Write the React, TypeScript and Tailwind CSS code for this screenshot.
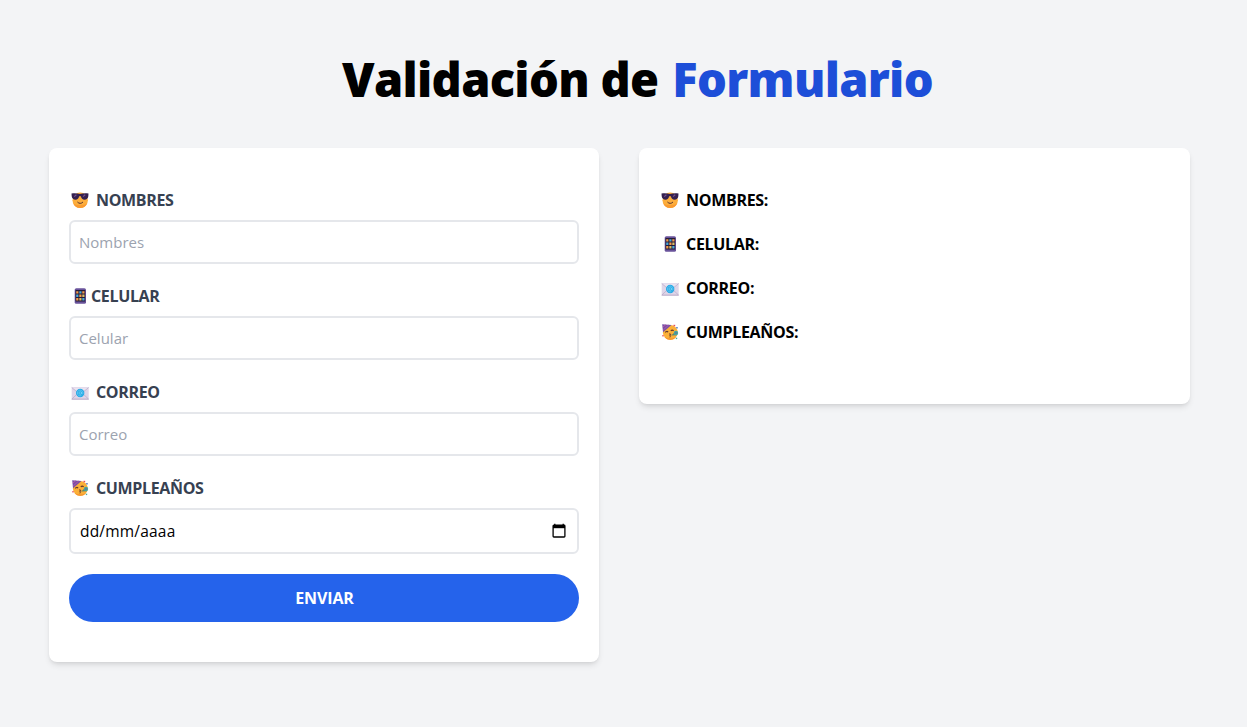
import React from 'react';

function CoolFace() {
  return (
    <svg viewBox="0 0 18 18" className="h-[18px] w-[18px] shrink-0">
      <circle cx="9.200" cy="9.200" r="7.700" fill="#fcae3c" />
      <path d="M2 12a7.700 7.700 0 0 0 14.400 0c-3.500 3-11 3-14.400 0Z" fill="#fa9b30" />
      <path d="M.5 2.600C3.200 1.800 6.200 2.200 9 3c2.800-.8 5.800-1.200 8.500-.4l-.2 2.600c-.3 2.300-1.700 3.500-3.800 3.500-2 0-3.200-1.200-3.600-3.500H8.100c-.4 2.300-1.600 3.500-3.600 3.500C2.400 8.700 1 7.500.7 5.200Z" fill="#35204f" />
      <path d="m3.200 5.600 2.200-1.800M12 5.600l2.200-1.800" stroke="#74518f" strokeWidth="1.200" />
      <path d="M6.700 11.300c1.500 1.500 3.500 1.500 5 0" stroke="#553034" strokeWidth="1" fill="none" strokeLinecap="round" />
    </svg>
  );
}

function Phone() {
  return (
    <svg viewBox="0 0 18 18" className="h-[18px] w-[18px] shrink-0">
      <rect x="3.700" y="1.200" width="11.300" height="15.600" rx="1.600" fill="#69539b" />
      <rect x="4.500" y="3" width="9.700" height="11.500" fill="#251c38" />
      <path d="M5.200 4.200h2.200v2.400H5.200zM11.300 4.200h2.200v2.400h-2.200zM8.300 7.500h2.200v2.400H8.300zM5.200 11h2.200v2.400H5.200z" fill="#f39a4a" />
      <path d="M8.300 4.200h2.200v2.400H8.300zM5.200 7.500h2.200v2.400H5.200zM11.300 11h2.200v2.400h-2.200z" fill="#4aa9d6" />
      <path d="M11.300 7.500h2.200v2.400h-2.200zM8.300 11h2.200v2.400H8.300z" fill="#d8bd67" />
    </svg>
  );
}

function Mail() {
  return (
    <svg viewBox="0 0 18 18" className="h-[18px] w-[18px] shrink-0">
      <rect x=".7" y="4" width="17" height="12.300" rx=".7" fill="#ded5e8" />
      <path d="m.7 4.500 8.500 7 8.500-7" fill="#e9e2ef" stroke="#b7a9c8" strokeWidth=".7" />
      <path d="m.9 16 5.300-5M17.500 16l-5.300-5" stroke="#b7a9c8" strokeWidth=".7" />
      <path d="M.7 16.200h17" stroke="#a997bc" strokeWidth=".8" />
      <circle cx="9.200" cy="10" r="4.200" fill="#25a9e5" />
      <circle cx="9.200" cy="10" r="1.300" fill="none" stroke="#8bdcfa" strokeWidth=".6" />
      <path d="M10.500 8.700v1.700c0 1.300 1.500.9 1.500-.5 0-3.700-5.600-3.700-5.600.1 0 2.600 2.400 3.500 4 2.500" fill="none" stroke="#8bdcfa" strokeWidth=".5" />
    </svg>
  );
}

function PartyFace() {
  return (
    <svg viewBox="0 0 18 18" className="h-[18px] w-[18px] shrink-0">
      <circle cx="9.300" cy="9.500" r="7.400" fill="#fbb038" />
      <path d="M3.300 13.700a7.400 7.400 0 0 0 12 0c-3 2-8.500 2-12 0Z" fill="#f7942f" />
      <path d="M1.200 1.300 10.500 2 2 9.300Z" fill="#7550a8" />
      <path d="m1.800 4 3-2.300M2.200 7l5.500-5" stroke="#c8589f" strokeWidth=".8" />
      <path d="M4.300 9.400q1.400-1.700 2.800-.3M9.800 7.900q1.500-1.600 2.800 0" fill="none" stroke="#63382c" strokeWidth="1.200" />
      <path d="M8 11q2.300-.5 1.700 1-.2.800-1.100.8 1.400.5.300 1.600" fill="none" stroke="#71402f" strokeWidth="1" />
      <path d="m10 12.600 4.500-3.800 1.600 3.400Z" fill="#60866d" />
      <circle cx="15" cy="10" r="2.200" fill="#45a8a0" />
      <circle cx="15" cy="10" r=".8" fill="#78539b" />
      <path d="M12.500 1.800h1.700v1.500h-1.700z" fill="#e84d57" />
      <path d="M15.200 4h1.500v1.500h-1.500z" fill="#5478bd" />
      <path d="M1.300 12h1.400v1.400H1.300z" fill="#e65861" />
      <path d="M14.800 14.700h1.400v1.400h-1.400z" fill="#50a998" />
    </svg>
  );
}

function CalendarIcon() {
  return (
    <svg viewBox="0 0 14 16" className="h-4 w-3.5 shrink-0">
      <path d="M2.800.8v2M11.200.8v2" stroke="#000" strokeWidth="1.300" />
      <rect x="1.100" y="2.200" width="11.800" height="11.800" rx=".8" fill="none" stroke="#000" strokeWidth="1.300" />
      <path d="M1 2h12v3.200H1z" />
    </svg>
  );
}

const fields = [
  { id: 'nombres', label: 'NOMBRES', placeholder: 'Nombres', icon: <CoolFace />, gap: 'gap-[7px]' },
  { id: 'celular', label: 'CELULAR', placeholder: 'Celular', icon: <Phone />, gap: 'gap-0.5' },
  { id: 'correo', label: 'CORREO', placeholder: 'Correo', icon: <Mail />, gap: 'gap-[7px]' },
  { id: 'cumple', label: 'CUMPLEAÑOS', placeholder: 'dd/mm/aaaa', icon: <PartyFace />, gap: 'gap-[7px]' },
];

export default function App() {
  return (
    <div className="min-h-screen bg-[#f3f4f6] pt-[55px] pr-[57px] pl-[49px] font-['Open_Sans','Noto_Sans',sans-serif] text-base text-black">
      <h1 className="flex h-12 justify-center gap-[14px] pl-9 text-[47px] leading-[48px] font-extrabold tracking-[-0.7px] whitespace-nowrap">
        <span>Validación de</span>
        <span className="text-[#1d4ed8]">Formulario</span>
      </h1>
      <main className="mt-[45px] flex items-start gap-10">
        <form className="w-[550px] rounded-lg bg-white px-5 py-10 shadow-md" onSubmit={(e) => e.preventDefault()}>
          {fields.map((f) => (
            <div key={f.id} className="mb-5">
              <label htmlFor={f.id} className={`flex h-6 items-center pl-0.5 font-bold tracking-[-0.35px] text-[#374151] ${f.gap}`}>
                {f.icon}
                <span>{f.label}</span>
              </label>
              {f.id === 'cumple' ? (
                <div className="mt-2 flex h-[46px] items-center rounded-md border-2 border-[#e5e7eb] pr-[11px] pl-[9px]">
                  <input id={f.id} placeholder={f.placeholder} className="w-full min-w-0 pt-0.5 text-[15.5px] tracking-[0.2px] outline-none placeholder:text-black" />
                  <CalendarIcon />
                </div>
              ) : (
                <input id={f.id} placeholder={f.placeholder} className="mt-2 block h-11 w-full rounded-md border-2 border-[#e5e7eb] px-2 text-[15px] outline-none placeholder:text-[#9ca3af]" />
              )}
            </div>
          ))}
          <button className="block h-12 w-full rounded-full bg-[#2563eb] pl-px font-bold tracking-[-0.1px] text-white">ENVIAR</button>
        </form>
        <section className="w-[551px] rounded-lg bg-white px-5 py-10 shadow-md">
          {fields.map((f) => (
            <p key={f.id} className="mb-5 flex h-6 items-center gap-[7px] pl-0.5 font-bold tracking-[-0.3px]">
              {f.icon}
              <span>{f.label}:</span>
            </p>
          ))}
        </section>
      </main>
    </div>
  );
}
